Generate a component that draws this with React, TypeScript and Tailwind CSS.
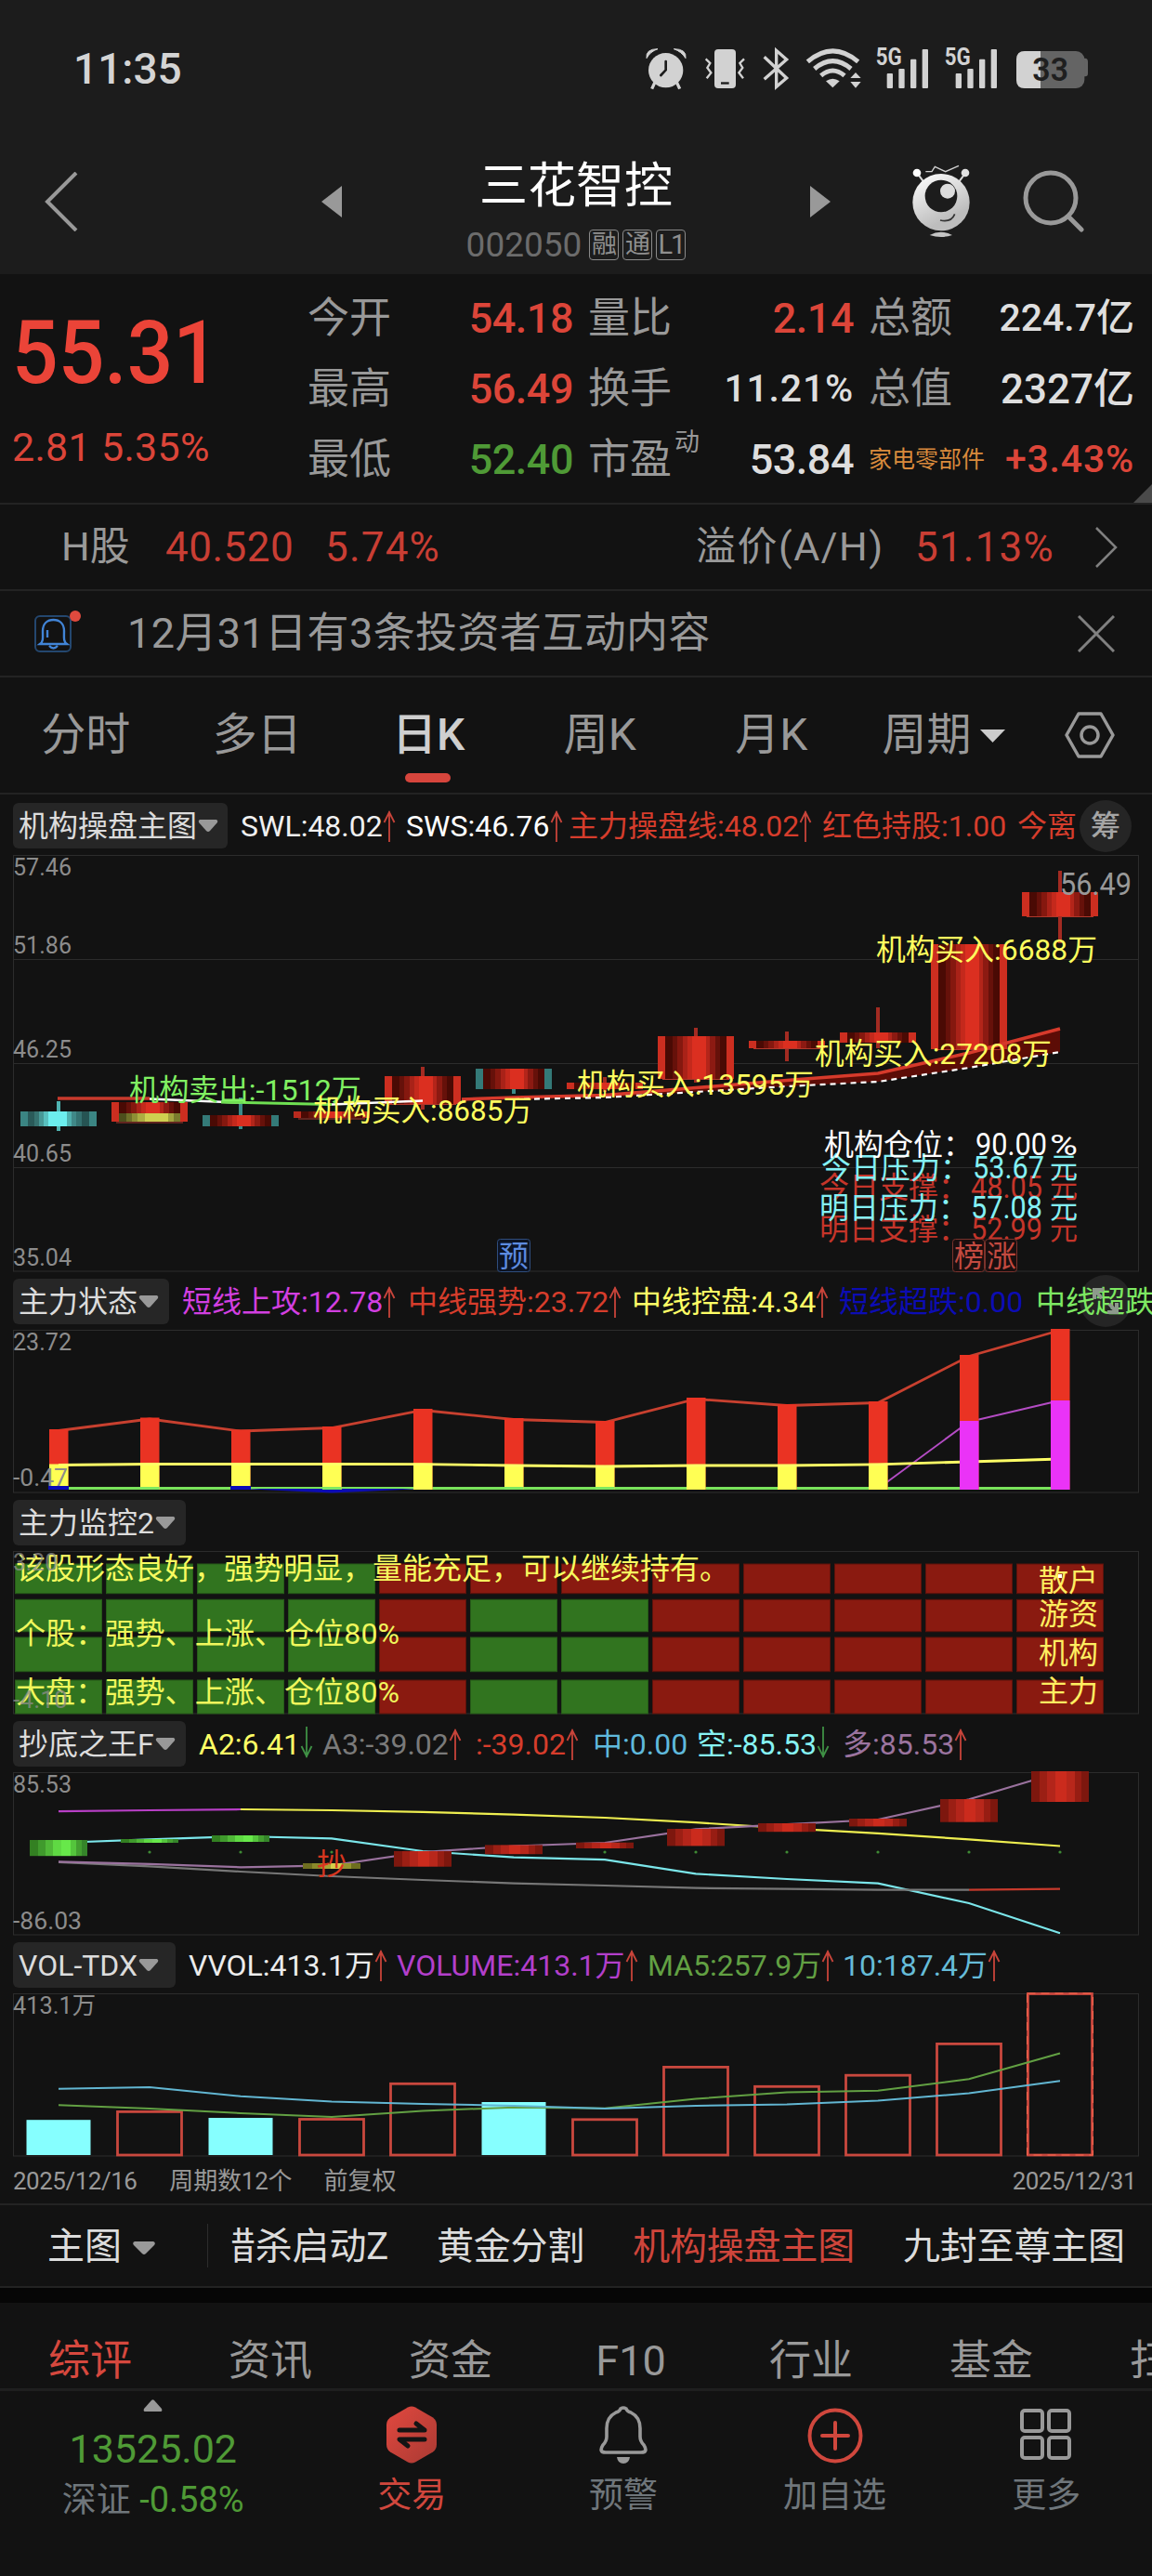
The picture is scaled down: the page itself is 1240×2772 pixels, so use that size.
import type { ReactNode } from 'react';

type Dir = 'up' | 'down';

interface Reading {
  text: string;
  color: string;
  width: string;
  dir?: Dir;
}

// horizontal centre of the n-th trading day
const cx = (i: number) => 63 + i * 98;

const points = (ys: number[], from = 0) => ys.map((y, i) => `${cx(i + from)},${y}`).join(' ');

const quotes = [
  { label: '今开', value: '54.18', style: 'text-[#dc4539] text-[45px] tracking-[-0.5px]' },
  { label: '量比', value: '2.14', style: 'text-[#dc4539] text-[45px] tracking-[-0.5px]' },
  { label: '总额', value: '224.7亿', style: 'text-[#dedede] text-[41px]' },
  { label: '最高', value: '56.49', style: 'text-[#dc4539] text-[45px] tracking-[-0.5px]' },
  { label: '换手', value: '11.21%', style: 'text-[#dedede] text-[41px] tracking-[0.8px]' },
  { label: '总值', value: '2327亿', style: 'text-[#dedede] text-[44px]' },
  { label: '最低', value: '52.40', style: 'text-[#4f9a36] text-[45px] tracking-[-0.5px]' },
  { label: '市盈', sup: '动', value: '53.84', style: 'text-[#dedede] text-[45px] tracking-[-0.5px]' },
  { label: '家电零部件', sector: true, value: '+3.43%', style: 'text-[#dc4539] text-[41px] tracking-[0.8px]' },
];

const mainReadings: Reading[] = [
  { text: 'SWL:48.02', color: 'text-[#f0f0f0]', width: 'w-[178px]', dir: 'up' },
  { text: 'SWS:46.76', color: 'text-white', width: 'w-[175px]', dir: 'up' },
  { text: '主力操盘线:48.02', color: 'text-[#d63d2c]', width: 'w-[273px]', dir: 'up' },
  { text: '红色持股:1.00', color: 'text-[#d63d2c]', width: 'w-[210px]' },
  { text: '今离场:0.00', color: 'text-[#d63d2c]', width: 'w-[180px]' },
];

const stateReadings: Reading[] = [
  { text: '短线上攻:12.78', color: 'text-[#d23fe0]', width: 'w-[243px]', dir: 'up' },
  { text: '中线强势:23.72', color: 'text-[#d63d2c]', width: 'w-[241px]', dir: 'up' },
  { text: '中线控盘:4.34', color: 'text-[#ffff66]', width: 'w-[223px]', dir: 'up' },
  { text: '短线超跌:0.00', color: 'text-[#0c0cb4]', width: 'w-[212px]' },
  { text: '中线超跌:0.00', color: 'text-[#7de862]', width: 'w-[212px]' },
];

const bottomReadings: Reading[] = [
  { text: 'A2:6.41', color: 'text-[#ffff66]', width: 'w-[133px]', dir: 'down' },
  { text: 'A3:-39.02', color: 'text-[#7a7a7a]', width: 'w-[165px]', dir: 'up' },
  { text: ':-39.02', color: 'text-[#d63d2c]', width: 'w-[126px]', dir: 'up' },
  { text: '中:0.00', color: 'text-[#5fb9dc]', width: 'w-[112px]' },
  { text: '空:-85.53', color: 'text-[#86f3f3]', width: 'w-[157px]', dir: 'down' },
  { text: '多:85.53', color: 'text-[#9b749f]', width: 'w-[150px]', dir: 'up' },
];

const volReadings: Reading[] = [
  { text: 'VVOL:413.1万', color: 'text-[#ececec]', width: 'w-[224px]', dir: 'up' },
  { text: 'VOLUME:413.1万', color: 'text-[#b33fcb]', width: 'w-[270px]', dir: 'up' },
  { text: 'MA5:257.9万', color: 'text-[#62a043]', width: 'w-[210px]', dir: 'up' },
  { text: '10:187.4万', color: 'text-[#66bcd8]', width: 'w-[190px]', dir: 'up' },
];

// top, bottom, high, low in chart pixels
const candles = [
  { t: 1196, b: 1212, h: 1185, l: 1217, edge: '#3b8583', fill: 'url(#cyan)', wick: '#4fb3b1' },
  { t: 1186, b: 1207, h: 1186, l: 1207, edge: '#cc2e20', fill: 'url(#red)', wick: '#a32b22' },
  { t: 1200, b: 1212, h: 1181, l: 1215, edge: '#347a78', fill: 'url(#red)', wick: '#3b8a88' },
  { t: 1196, b: 1203, h: 1196, l: 1203, edge: '#b92a1e', fill: 'url(#red)', wick: '#a32b22' },
  { t: 1158, b: 1188, h: 1148, l: 1194, edge: '#cc2e20', fill: 'url(#red)', wick: '#a32b22' },
  { t: 1150, b: 1172, h: 1150, l: 1177, edge: '#347a78', fill: 'url(#red)', wick: '#3b8a88' },
  { t: 1165, b: 1172, h: 1159, l: 1175, edge: '#cc2e20', fill: 'url(#red)', wick: '#a32b22' },
  { t: 1115, b: 1161, h: 1106, l: 1165, edge: '#cc2e20', fill: 'url(#red)', wick: '#a32b22' },
  { t: 1120, b: 1128, h: 1110, l: 1142, edge: '#cc2e20', fill: 'url(#red)', wick: '#a32b22' },
  { t: 1111, b: 1122, h: 1084, l: 1128, edge: '#cc2e20', fill: 'url(#red)', wick: '#a32b22' },
  { t: 1016, b: 1129, h: 1016, l: 1129, edge: '#cc2e20', fill: 'url(#red)', wick: '#a32b22' },
  { t: 960, b: 986, h: 937, l: 1015, edge: '#cc2e20', fill: 'url(#red)', wick: '#a32b22' },
];

const stateTops = [1538, 1525.5, 1538.5, 1535, 1516, 1526, 1529, 1504, 1511, 1508, 1458, 1430];
const stateMid = [1576.5, 1575.5, 1575.5, 1575.5, 1575.7, 1577, 1578, 1577, 1577, 1575.8, 1573, 1570];

const gridRows = [
  { y: 1683, h: 31.7, cells: 'ggggrrrrrrrr' },
  { y: 1721.3, h: 34.4, cells: 'ggggrggrrrrr' },
  { y: 1762, h: 36.7, cells: 'ggggrggrrrrr' },
  { y: 1808, h: 36, cells: 'ggggrggrrrrr' },
];

const kingBars = [
  [1980, 1997.2, 'url(#kg)'],
  [1979, 1983, 'url(#kg)'],
  [1975, 1982, 'url(#kg)'],
  [2005, 2011, 'url(#ky)'],
  [1992, 2008.7, 'url(#kr)'],
  [1985.4, 1995.2, 'url(#kr)'],
  [1982.7, 1989, 'url(#kr)'],
  [1968, 1986.4, 'url(#kr)'],
  [1962, 1971.2, 'url(#kr)'],
  [1957, 1965.4, 'url(#kr)'],
  [1936, 1960.7, 'url(#kr)'],
  [1906, 1939, 'url(#kr)'],
] as const;

const volTops = [2281.2, 2271.4, 2279, 2279.5, 2241.3, 2262, 2279.8, 2223.4, 2244.3, 2232.2, 2198.4, 2144.5];
const volDown = [0, 2, 5];

function T({ x, y, w, size = 32, fill, children }: { x: number; y: number; w?: number; size?: number; fill: string; children: string }) {
  return (
    <text x={x} y={y} fontSize={size} fill={fill} textLength={w} lengthAdjust="spacingAndGlyphs">
      {children}
    </text>
  );
}

function AxisLabel({ y, w, children }: { y: number; w: number; children: string }) {
  return <T x={14} y={y} w={w} size={26} fill="#8c8c8c">{children}</T>;
}

// gradient made of hard stripes, [width, colour] pairs
function Stripes({ id, bands }: { id: string; bands: [number, string][] }) {
  const total = bands.reduce((sum, [w]) => sum + w, 0);
  let pos = 0;
  return (
    <linearGradient id={id}>
      {bands.flatMap(([w, color], i) => {
        const start = pos / total;
        pos += w;
        return [
          <stop key={`${i}a`} offset={start} stopColor={color} />,
          <stop key={`${i}b`} offset={pos / total} stopColor={color} />,
        ];
      })}
    </linearGradient>
  );
}

function Chart({ top, height, children }: { top: number; height: number; children: ReactNode }) {
  return (
    <svg className="block w-full shrink-0 overflow-visible" height={height} viewBox={`0 ${top} 1240 ${height}`}>
      <rect x="14.5" y={top + 0.5} width="1211" height={height - 1.5} fill="none" stroke="#2c2c2c" />
      {children}
    </svg>
  );
}

function Arrow({ dir }: { dir: Dir }) {
  return dir === 'up' ? (
    <svg className="h-[34px] w-[14px] shrink-0" viewBox="0 0 14 34" fill="none" stroke="#c8443a" strokeWidth="1.8">
      <path d="M7 1v33M1.500 13L7 2l5.500 11" />
    </svg>
  ) : (
    <svg className="mb-[3px] h-[34px] w-[14px] shrink-0" viewBox="0 0 14 34" fill="none" stroke="#3f9145" strokeWidth="1.8">
      <path d="M7 0v33M1.500 21L7 32l5.500-11" />
    </svg>
  );
}

function PanelHeader({ title, box, pad, chip, readings = [], children }: { title: string; box: string; pad: string; chip: string; readings?: Reading[]; children?: ReactNode }) {
  return (
    <div className={`relative flex shrink-0 overflow-hidden pl-3.5 ${box} ${pad}`}>
      <button className={`flex h-[49px] shrink-0 items-center rounded-md bg-[#262626] pl-1.5 text-[32px] text-[#dcdcdc] ${chip}`}>
        <span className="whitespace-nowrap">{title}</span>
        <svg className="ml-px h-3.5 w-[22px] shrink-0" viewBox="0 0 22 14">
          <path d="M2 0h18q2 1 1 3l-8 9q-2 2-4 0L1 3Q0 1 2 0z" fill="#999" />
        </svg>
      </button>
      <div className="relative z-10 ml-[14px] flex h-[49px] items-center text-[32px] whitespace-nowrap">
        {readings.map((r) => (
          <div key={r.text} className={`flex shrink-0 items-center ${r.width} ${r.color}`}>
            {r.text}
            {r.dir && <Arrow dir={r.dir} />}
          </div>
        ))}
      </div>
      {children}
    </div>
  );
}

function StatusIcons() {
  return (
    <svg className="h-[60px] w-[520px]" viewBox="0 0 1560 180" fill="#d2d2d2">
      <circle cx="110" cy="107" r="56" />
      <path d="M48 68Q44 38 84 38Q60 46 48 68zM174 68Q178 38 136 38Q160 46 174 68z" stroke="#d2d2d2" strokeWidth="3" />
      <path d="M75 145l-10 22M145 145l10 22" stroke="#d2d2d2" strokeWidth="10" />
      <path d="M110 78v28l-16 17" stroke="#1c1c1c" strokeWidth="8" fill="none" strokeLinecap="round" />
      <rect x="267" y="39" width="69" height="126" rx="12" />
      <rect x="288" y="145" width="26" height="7" fill="#1c1c1c" />
      <path d="M239 70l14 14-9 15 12 16-14 18M363 70l-14 14 9 15-12 16 14 18" stroke="#d2d2d2" strokeWidth="7" fill="none" />
      <path d="M428 64l72 68-33 28V43l33 29-72 64" stroke="#d2d2d2" strokeWidth="10" fill="none" />
      <g fill="none" stroke="#d2d2d2" strokeWidth="15">
        <path d="M568 79Q649 10 731 79" />
        <path d="M590 102Q649 52 708 102" />
        <path d="M611 124Q649 92 687 124" />
      </g>
      <path d="M627 142Q649 126 671 142L649 163z" />
      <path d="M706 132l17-18 17 18zM706 144h34l-17 20z" />
      <Signal x={0} />
      <Signal x={222} />
      <path d="M1460 68h4q9 0 9 11v38q0 10-9 10h-4z" fill="#646464" />
      <rect x="1242" y="45" width="220" height="120" rx="27" fill="#646464" />
      <path d="M1320 45h-51q-27 0-27 27v66q0 27 27 27h51z" />
      <text x="1294" y="142" fontSize="105" fontWeight="600" fill="#1f1f1f" textLength="116" lengthAdjust="spacingAndGlyphs">33</text>
    </svg>
  );
}

function Signal({ x }: { x: number }) {
  return (
    <g transform={`translate(${x} 0)`}>
      <text x="788" y="91" fontSize="76" fontWeight="700" textLength="84" lengthAdjust="spacingAndGlyphs">5G</text>
      <rect x="824" y="117" width="19" height="48" rx="3" />
      <rect x="862" y="102" width="19" height="63" rx="3" />
      <rect x="900" y="71" width="19" height="94" rx="3" />
      <rect x="938" y="39" width="19" height="126" rx="3" />
    </g>
  );
}

function Robot() {
  return (
    <svg className="h-[80px] w-[64px]" viewBox="904 408 192 240">
      <defs>
        <linearGradient id="body" x1="0.2" y1="0" x2="0.7" y2="1">
          <stop offset="0" stopColor="#fafafa" />
          <stop offset="0.8" stopColor="#bdbdbd" />
        </linearGradient>
      </defs>
      <path d="M925 442l18 24M1076 442l-18 24" stroke="#d8d8d8" strokeWidth="6" />
      <circle cx="922" cy="438" r="13" fill="#fff" />
      <circle cx="1078" cy="438" r="13" fill="#e2e2e2" />
      <path d="M950 434h20l10-16 34 16 43-19" fill="none" stroke="#d0d0d0" strokeWidth="4" />
      <circle cx="1000" cy="533" r="92" fill="url(#body)" />
      <circle cx="1000" cy="513" r="52" fill="#1c1c1c" />
      <circle cx="1021" cy="497" r="24" fill="#dcdcdc" />
      <path d="M997 591q36 8 47-20" fill="none" stroke="#333" strokeWidth="5" />
      <path d="M963 639q36-20 73 0-36 12-73 0z" fill="#c4c4c4" />
    </svg>
  );
}

function Header() {
  return (
    <header className="h-[295px] shrink-0 bg-[#1c1c1c]">
      <div className="flex h-[150px] items-start justify-between pt-10 pr-10 pl-[79px]">
        <div className="mt-[7px] text-[46px] leading-[54px] font-medium text-[#d4d4d4]">11:35</div>
        <StatusIcons />
      </div>
      <div className="flex h-[145px]">
        <svg className="mt-[35px] ml-[48px] h-[64px] w-9" viewBox="0 0 36 64" fill="none" stroke="#999" strokeWidth="4">
          <path d="M34 1L3 32l31 31" />
        </svg>
        <svg className="mt-[50px] ml-[262px] h-[34px] w-[22px]" viewBox="0 0 22 34"><path d="M22 0v34L0 17z" fill="#999" /></svg>
        <div className="ml-[134px] flex w-[236px] flex-col items-center">
          <h1 className="mt-[21px] text-[52px] leading-[60px] font-normal whitespace-nowrap text-white">三花智控</h1>
          <div className="mt-[14px] flex items-center gap-1 text-[27px] leading-none text-[#8f8f8f]">
            <span className="mr-1 text-[37px] text-[#6c6c6c]">002050</span>
            <span className="flex h-[33px] w-8 items-center justify-center rounded border border-[#8a8a8a]">融</span>
            <span className="flex h-[33px] w-8 items-center justify-center rounded border border-[#8a8a8a]">通</span>
            <span className="flex h-[33px] w-8 items-center justify-center rounded border border-[#8a8a8a] text-[29px] tracking-[-2px]">L1</span>
          </div>
        </div>
        <svg className="mt-[50px] ml-[134px] h-[34px] w-[22px]" viewBox="0 0 22 34"><path d="M0 0v34l22-17z" fill="#999" /></svg>
        <div className="mt-[26px] ml-[87px]"><Robot /></div>
        <svg className="mt-[33px] ml-[54px] h-[68px] w-[68px]" viewBox="0 0 68 68" fill="none" stroke="#999" strokeWidth="5">
          <circle cx="32" cy="30" r="27" />
          <path d="M51 50l14 14" strokeLinecap="round" />
        </svg>
      </div>
    </header>
  );
}

function Quote() {
  return (
    <section className="relative flex h-[246px] shrink-0">
      <div className="w-[331px] pl-[13px]">
        <div className="mt-[35px] origin-left scale-x-[0.93] text-[94px] leading-[100px] font-medium text-[#eb4438]">55.31</div>
        <div className="mt-[27px] text-[43px] leading-[48px] tracking-[0.3px] whitespace-nowrap text-[#dc4539]">2.81 5.35%</div>
      </div>
      <div className="mt-[10px] grid h-[228px] grid-cols-[286px_286px_286px] grid-rows-[76px_76px_76px] gap-x-4">
        {quotes.map((q) => (
          <div key={q.label} className="flex items-center justify-between whitespace-nowrap">
            {q.sector ? (
              <span className="text-[25px] text-[#d98a3c]">{q.label}</span>
            ) : (
              <span className="relative text-[45px] text-[#999]">
                {q.label}
                {q.sup && <sup className="absolute top-[2px] left-[93px] text-[27px] leading-none">{q.sup}</sup>}
              </span>
            )}
            <span className={`font-medium ${q.style}`}>{q.value}</span>
          </div>
        ))}
      </div>
      <svg className="absolute right-0 bottom-0 h-5 w-5" viewBox="0 0 20 20"><path d="M20 0v20H0z" fill="#4a4a4a" /></svg>
    </section>
  );
}

function HShare() {
  return (
    <section className="flex h-[93px] shrink-0 items-center border-t-2 border-[#232323] pl-[66px] text-[44px] whitespace-nowrap text-[#c93e34]">
      <span className="w-[112px] text-[43px] text-[#999]">H股</span>
      <span className="w-[172px] tracking-[0.5px]">40.520</span>
      <span className="w-[399px] tracking-[1.2px]">5.74%</span>
      <span className="w-[236px] text-[43px] tracking-[1.5px] text-[#999]">溢价(A/H)</span>
      <span className="w-[194px] tracking-[1.2px]">51.13%</span>
      <svg className="h-11 w-6" viewBox="0 0 24 44" fill="none" stroke="#808080" strokeWidth="2.500"><path d="M1 1l21 21L1 43" /></svg>
    </section>
  );
}

function Notice() {
  return (
    <section className="flex h-[93px] shrink-0 items-center border-t-2 border-[#232323] pl-9">
      <svg className="mt-[-4px] h-[48px] w-[52px] shrink-0" viewBox="0 0 52 48" fill="none">
        <rect x="2" y="7" width="38" height="38" rx="5" stroke="#24476f" strokeWidth="2" />
        <path d="M7 37h29c-4-3-3-7-3-14 0-8-5-12-11.500-12S10 15 10 23c0 7 1 11-3 14zM17 39q4.500 5 9 0M15 22v8" stroke="#4184d6" strokeWidth="2.400" />
        <circle cx="45" cy="7" r="6" fill="#e04a3e" />
      </svg>
      <span className="ml-[49px] text-[45px] tracking-[0.4px] whitespace-nowrap text-[#999]">12月31日有3条投资者互动内容</span>
      <svg className="mr-10 ml-auto h-10 w-10" viewBox="0 0 40 40" fill="none" stroke="#808080" strokeWidth="3"><path d="M1 1l38 38M39 1L1 39" /></svg>
    </section>
  );
}

function PeriodTabs() {
  return (
    <nav className="flex h-[128px] shrink-0 items-center border-y-2 border-[#232323] text-[48px] text-[#999]">
      {['分时', '多日', '日K', '周K', '月K'].map((t) => (
        <div key={t} className="relative flex w-[184.500px] justify-center">
          <span className={t === '日K' ? 'font-medium text-[#cfcfcf]' : ''}>{t}</span>
          {t === '日K' && <i className="absolute -bottom-[15px] left-[67px] h-2.5 w-[49px] rounded-full bg-[#d6453c]" />}
        </div>
      ))}
      <div className="ml-[27px] flex items-center">
        周期
        <svg className="mt-0.5 ml-[9px] h-[14px] w-[27px]" viewBox="0 0 27 14"><path d="M0 0h27L13.500 14z" fill="#ccc" /></svg>
      </div>
      <svg className="ml-[64px] h-[50px] w-[54px]" viewBox="0 0 54 50" fill="none" stroke="#999" strokeWidth="3.500">
        <path d="M15 2h24l13 23-13 23H15L2 25z" strokeLinejoin="round" />
        <circle cx="27" cy="25" r="9" />
      </svg>
    </nav>
  );
}

function MainChart() {
  const trend = [1181, 1178.5, 1170.6, 1162.6, 1155, 1133, 1107];
  const base = [1183, 1181, 1175, 1169, 1164, 1149, 1132];
  const levels: [string, string, string, number, number, string][] = [
    ['今日支撑', '48.05', '元', 1045, 1289, '#c5352a'],
    ['今日压力', '53.67', '元', 1047, 1268, '#84f0f4'],
    ['明日支撑', '52.99', '元', 1045, 1334, '#c5352a'],
    ['明日压力', '57.08', '元', 1045, 1311, '#84f0f4'],
    ['机构仓位', '90.00', '%', 1050, 1243, '#ffffff'],
  ];
  return (
    <Chart top={920} height={449}>
      <defs>
        <Stripes id="red" bands={[[9, '#4a0a04'], [6, '#66110a'], [6, '#85180f'], [6, '#a92218'], [6, '#c4291c'], [16, '#db2f20'], [5, '#b3251a'], [6, '#8c1a12'], [6, '#66110a'], [8, '#4a0a04']]} />
        <Stripes id="cyan" bands={[[7, '#2a5a59'], [5, '#367270'], [5, '#479997'], [5, '#58c0bf'], [20, '#6ceeee'], [5, '#4fb0ae'], [5, '#408988'], [6, '#347170'], [8, '#265453']]} />
        <Stripes id="yellow" bands={[[8, '#4d4f1c'], [6, '#6f7029'], [6, '#8e8f35'], [8, '#adad42'], [26, '#cfcf50'], [6, '#a3a33e'], [7, '#7a7b2d']]} />
      </defs>
      <path d="M15 1032.500h1210M15 1144.500h1210M15 1256.500h1210" stroke="#2c2c2c" />
      <AxisLabel y={942} w={63}>57.46</AxisLabel>
      <AxisLabel y={1026} w={63}>51.86</AxisLabel>
      <AxisLabel y={1138} w={63}>46.25</AxisLabel>
      <AxisLabel y={1250} w={63}>40.65</AxisLabel>
      <AxisLabel y={1362} w={63}>35.04</AxisLabel>
      <polygon points={`${points(trend, 5)} ${[...base].reverse().map((y, i) => `${cx(11 - i)},${y}`).join(' ')}`} fill="#5c0c06" />
      {candles.map((c, i) => (
        <g key={i}>
          <rect x={cx(i) - 2} y={c.h} width="4" height={c.l - c.h} fill={c.wick} />
          <rect x={cx(i) - 41} y={c.t} width="82" height={c.b - c.t} fill={c.edge} />
          <rect x={cx(i) - 33} y={c.t} width="66" height={c.b - c.t} fill={c.fill} />
        </g>
      ))}
      <rect x="128" y="1198" width="66" height="9" fill="url(#yellow)" />
      <path d="M125 1208h72M321 1204h72M419 1188.500h72M713 1161.500h72M811 1128.500h72M1007 1129.500h72M1105 986.500h72" stroke="#b0382c" />
      <path d="M1141 986v29" stroke="#a32b22" strokeWidth="4" />
      <path d="M62 1182h99" stroke="#c93a2c" strokeWidth="3.500" />
      <path d="M161 1182.500l98 4" stroke="#fff" strokeWidth="2.500" />
      <path d="M238 1186l119 2.500" stroke="#6fe052" strokeWidth="3" />
      <path d="M357 1188.500l98-4" stroke="#fff" strokeWidth="2.500" />
      <polyline points={`497,1183 ${points(trend, 5)}`} fill="none" stroke="#d63a2b" strokeWidth="3.500" />
      <polyline points={points(base, 5)} fill="none" stroke="#fff" strokeWidth="2.200" strokeDasharray="6 5" />
      <T x={139} y={1184} w={250} fill="#80f062">机构卖出:-1512万</T>
      <T x={337} y={1206} w={236} fill="#ffff5e">机构买入:8685万</T>
      <T x={621} y={1178} w={255} fill="#ffff5e">机构买入:13595万</T>
      <T x={877} y={1145} w={255} fill="#ffff5e">机构买入:27208万</T>
      <T x={943} y={1033} w={238} fill="#ffff5e">机构买入:6688万</T>
      <T x={1141} y={963} w={77} size={33} fill="#999">56.49</T>
      {levels.map(([name, value, unit, x, y, color]) => (
        <g key={name}>
          <T x={x - 163} y={y} fill={color}>{`${name}：`}</T>
          <T x={x} y={y} w={77} size={33} fill={color}>{value}</T>
          <T x={1130} y={y} w={30} fill={color}>{unit}</T>
        </g>
      ))}
      <rect x="535.500" y="1333.500" width="35" height="35" rx="3" fill="#0c1424" stroke="#2f4d7e" />
      <T x={537} y={1363} fill="#5d8be0">预</T>
      <rect x="1025.500" y="1333.500" width="34" height="35" rx="3" fill="#1a0f0f" stroke="#7a322c" />
      <rect x="1060.500" y="1333.500" width="34" height="35" rx="3" fill="#1a0f0f" stroke="#7a322c" />
      <T x={1027} y={1363} fill="#c24a40">榜</T>
      <T x={1062} y={1363} fill="#c24a40">涨</T>
    </Chart>
  );
}

function StateChart() {
  return (
    <Chart top={1431} height={176}>
      <AxisLabel y={1453} w={63}>23.72</AxisLabel>
      <polyline points={points(stateTops.map((y) => y + 1.5))} fill="none" stroke="#c8402f" strokeWidth="2.800" />
      <polyline points={points([1602, 1530, 1507], 9)} fill="none" stroke="#b44cc4" strokeWidth="2" />
      <path d="M63 1601.500H1141" stroke="#79e35b" strokeWidth="3" />
      <path d="M259 1602L357 1606.500 455 1602z" fill="#0c0cb4" />
      {stateTops.map((top, i) => (
        <g key={i}>
          <rect x={cx(i) - 10} y={top} width="20.500" height={1603 - top} fill="#ea3323" />
          {i < 10 && <rect x={cx(i) - 10} y={stateMid[i] - 1} width="20.500" height={1604 - stateMid[i]} fill="#ffff54" />}
          {[1, 3, 5, 6].includes(i) && <rect x={cx(i) - 10} y="1600" width="20.500" height="3" fill="#7eea60" />}
          {[0, 2].includes(i) && <rect x={cx(i) - 11} y="1599" width="22" height="4" fill="#0a0ab8" />}
        </g>
      ))}
      <polyline points={points(stateMid)} fill="none" stroke="#ffff66" strokeWidth="2.800" />
      <rect x="1033" y="1529" width="20.500" height="74" fill="#ea33f7" />
      <rect x="1131" y="1507" width="20.500" height="96" fill="#ea33f7" />
      <AxisLabel y={1599} w={59}>-0.47</AxisLabel>
    </Chart>
  );
}

function MonitorChart() {
  const tags: [string, number][] = [['散户', 1712], ['游资', 1748], ['机构', 1790], ['主力', 1831]];
  return (
    <Chart top={1669} height={176}>
      {gridRows.map((row) =>
        row.cells.split('').map((c, i) => (
          <rect
            key={`${row.y}-${i}`}
            x={cx(i) - 46.5}
            y={row.y}
            width="93"
            height={row.h}
            fill={c === 'g' ? '#31741f' : '#8a1a10'}
            stroke={c === 'g' ? '#265c18' : '#5e120b'}
            strokeWidth="1"
          />
        )),
      )}
      <T x={17} y={1699} fill="#f7fb5f">该股形态良好，强势明显，量能充足，可以继续持有。</T>
      <T x={17} y={1769} w={413} fill="#f0f75c">个股：强势、上涨、仓位80%</T>
      <T x={17} y={1832} w={413} fill="#f0f75c">大盘：强势、上涨、仓位80%</T>
      {tags.map(([name, y]) => <T key={name} x={1118} y={y} fill="#ffee60">{name}</T>)}
      <rect x="1139" y="1694" width="4" height="4" fill="#fff" />
      <g opacity="0.75">
        <AxisLabel y={1690} w={48}>3.20</AxisLabel>
        <AxisLabel y={1838} w={59}>-4.10</AxisLabel>
      </g>
    </Chart>
  );
}

function KingChart() {
  return (
    <Chart top={1907} height={176}>
      <defs>
        <Stripes id="kg" bands={[[9, '#338022'], [8, '#409a2d'], [8, '#50b838'], [9, '#5fd943'], [10, '#67e84a'], [6, '#54c53c'], [6, '#439f30'], [6, '#35852a']]} />
        <Stripes id="ky" bands={[[10, '#6e6e20'], [10, '#8a8a2a'], [10, '#a5a634'], [12, '#d6cf4a'], [10, '#94952e'], [10, '#6e6e20']]} />
        <Stripes id="kr" bands={[[9, '#7d170e'], [8, '#9b1f14'], [9, '#b3251a'], [12, '#cb2b1d'], [9, '#b8271b'], [7, '#971d13'], [8, '#7d170e']]} />
      </defs>
      <AxisLabel y={1929} w={63}>85.53</AxisLabel>
      <AxisLabel y={2075.5} w={74}>-86.03</AxisLabel>
      <g fill="none" strokeWidth="2.200">
        <polyline points={points([1949.2, 1948, 1947])} stroke="#b83fc6" />
        <polyline points={points([1947, 1948, 1949.8, 1952.6, 1956, 1961.2, 1967.3, 1972.8, 1979.4, 1986.5], 2)} stroke="#eeee50" />
        <polyline points={points([1983, 1979.4, 1976, 1978.4, 1992, 1998.7, 2001.2, 2016.4, 2022, 2026.6, 2048, 2080.3])} stroke="#7be6ea" />
        <polyline points={points([2003.8, 2008.3, 2014, 2019, 2023, 2026.6, 2029, 2031.7, 2032.7, 2033.7, 2033.7])} stroke="#777" />
        <polyline points={points([2033.7, 2032.7], 10)} stroke="#c63a2c" />
        <polyline points={points([2003.3, 2005.8, 2009.3, 2007.3, 1993, 1986.5, 1983, 1968.3, 1963.2, 1958, 1936.3, 1907])} stroke="#9a729e" />
      </g>
      {kingBars.map(([top, bottom, fill], i) => (
        <rect key={i} x={cx(i) - 31} y={top} width="62" height={bottom - top} fill={fill} />
      ))}
      {[1, 2, 3, 6, 7, 8, 9, 10, 11].map((i) => <circle key={i} cx={cx(i)} cy="1993" r="1.600" fill="#3f8a35" />)}
      <T x={341} y={2017} fill="#d8361f">抄</T>
    </Chart>
  );
}

function VolumeChart() {
  return (
    <Chart top={2145} height={176}>
      <AxisLabel y={2167} w={89}>413.1万</AxisLabel>
      {volTops.map((top, i) =>
        volDown.includes(i) ? (
          <rect key={i} x={cx(i) - 34.5} y={top} width="69" height={2319 - top} fill="#86ffff" />
        ) : (
          <rect key={i} x={cx(i) - 34.5} y={top + 1} width="69" height={2318 - top} fill="none" stroke="#c9483e" strokeWidth="2.800" />
        ),
      )}
      <rect x={cx(11) - 35.5} y="2145" width="71" height="174" fill="none" stroke="#ff6a50" strokeWidth="1" strokeDasharray="9 6" />
      <g fill="none" strokeWidth="2">
        <polyline points={points([2265.3, 2269, 2274, 2278, 2271.4, 2267.7, 2268.7, 2258.5, 2251.4, 2249.7, 2237.2, 2209.5])} stroke="#62a043" />
        <polyline points={points([2247.7, 2246, 2255.8, 2261.6, 2264, 2266, 2269, 2266, 2264.6, 2260.5, 2252.4, 2239.3])} stroke="#62b6d2" />
      </g>
    </Chart>
  );
}

function IndicatorBar() {
  return (
    <div className="flex h-[91px] shrink-0 items-center border-y-2 border-[#232323] text-[40px] whitespace-nowrap text-[#dcdcdc]">
      <div className="flex w-[223px] shrink-0 items-center pt-0.5 pl-[51px]">
        主图
        <svg className="mt-1 ml-3 h-[15px] w-6" viewBox="0 0 24 15"><path d="M2 0h20q3 1 1 4l-9 9q-2 2-4 0L1 4q-2-3 1-4z" fill="#999" /></svg>
      </div>
      <div className="mr-[25px] h-[47px] w-px shrink-0 bg-[#2c2c2c]" />
      <div className="flex flex-1 gap-[52px] overflow-hidden pt-0.5 tracking-[-0.2px]">
        <span className="-ml-3.5">猎杀启动Z</span>
        <span>黄金分割</span>
        <span className="text-[#cf453b]">机构操盘主图</span>
        <span>九封至尊主图</span>
      </div>
    </div>
  );
}

function NavItem({ label, color, children }: { label: string; color: string; children: ReactNode }) {
  return (
    <div className={`flex w-[228px] flex-col items-center text-[37px] ${color}`}>
      <svg className="mt-4 h-[62px] w-[62px]" viewBox="0 0 62 62" fill="none">{children}</svg>
      <span className="mt-[11px] leading-[48px]">{label}</span>
    </div>
  );
}

function BottomNav() {
  return (
    <footer className="flex h-[199px] shrink-0">
      <div className="flex w-[330px] flex-col items-center text-[#4f9a36]">
        <svg className="mt-[9px] h-[13px] w-[21px]" viewBox="0 0 21 13"><path d="M9 1q1.500-1.500 3 0l8 9q1 3-1 3H2q-2 0-1-3z" fill="#999" /></svg>
        <div className="mt-[14px] text-[43px] leading-[52px]">13525.02</div>
        <div className="mt-[5px] text-[38px] leading-[48px]"><span className="text-[37px] text-[#6f767b]">深证</span> -0.58%</div>
      </div>
      <NavItem label="交易" color="text-[#d0473d]">
        <defs>
          <linearGradient id="hex" x1="0" y1="0" x2="1" y2="1"><stop offset="0" stopColor="#e2483f" /><stop offset="1" stopColor="#a93a33" /></linearGradient>
        </defs>
        <path d="M27 1.500q4-2 8 0l19 11q4 3 4 8v21q0 5-4 8l-19 11q-4 2-8 0l-19-11q-4-3-4-8v-21q0-5 4-8z" fill="url(#hex)" />
        <path d="M18 26h27l-9-7M45 36H18l9 7" stroke="#141414" strokeWidth="5" strokeLinecap="round" strokeLinejoin="round" />
      </NavItem>
      <NavItem label="预警" color="text-[#6f767b]">
        <path d="M28 3q3-2 6 0 1 3 5 4 10 5 10 17v9q0 5 4 9 5 8-3 8H12q-8 0-3-8 4-4 4-9v-9Q13 12 23 7q4-1 5-4z" stroke="#999" strokeWidth="3.600" />
        <path d="M24 55h14q-1 7-7 7t-7-7z" fill="#999" />
      </NavItem>
      <NavItem label="加自选" color="text-[#6f767b]">
        <circle cx="31" cy="32" r="27.500" stroke="#d0473d" strokeWidth="4" />
        <path d="M31 18v28M17 32h28" stroke="#d0473d" strokeWidth="4" strokeLinecap="round" />
      </NavItem>
      <NavItem label="更多" color="text-[#6f767b]">
        <g stroke="#999" strokeWidth="4">
          <rect x="5" y="5" width="22" height="22" rx="3" />
          <rect x="34" y="5" width="22" height="22" rx="3" />
          <rect x="5" y="34" width="22" height="22" rx="3" />
          <rect x="34" y="34" width="22" height="22" rx="3" />
        </g>
      </NavItem>
    </footer>
  );
}

export default function App() {
  return (
    <div className="flex h-[2772px] w-[1240px] flex-col overflow-hidden bg-[#121212] [font-family:Roboto,'Noto_Sans_CJK_SC',sans-serif]">
      <Header />
      <Quote />
      <HShare />
      <Notice />
      <PeriodTabs />

      <PanelHeader title="机构操盘主图" box="h-[65px]" pad="pt-[9px]" chip="w-[231px]" readings={mainReadings}>
        <div className="absolute top-[6px] left-[1158px] z-20 h-[56px] w-[82px] bg-[#121212] pl-1">
          <span className="flex h-14 w-14 items-center justify-center rounded-full bg-[#252525] text-[32px] font-medium text-[#a5a5a5]">筹</span>
        </div>
      </PanelHeader>
      <MainChart />

      <PanelHeader title="主力状态" box="h-[62px]" pad="pt-[7px]" chip="w-[168px]" readings={stateReadings}>
        <span className="absolute top-[3px] left-[1162px] h-14 w-14 rounded-full bg-[#252525]" />
        <svg className="absolute top-[16px] left-[1175px] z-20 h-[30px] w-[30px]" viewBox="0 0 30 30" fill="none" stroke="#8d9a8c" strokeWidth="4">
          <path d="M13 3H3v10M4 4l7 8M17 27h10V17M26 26l-7-8" />
        </svg>
      </PanelHeader>
      <StateChart />

      <PanelHeader title="主力监控2" box="h-[62px]" pad="pt-[7px]" chip="w-[186px]" />
      <MonitorChart />

      <PanelHeader title="抄底之王F" box="h-[62px]" pad="pt-[7px]" chip="w-[186px]" readings={bottomReadings} />
      <KingChart />

      <PanelHeader title="VOL-TDX" box="h-[62px]" pad="pt-[7px]" chip="w-[175px]" readings={volReadings} />
      <VolumeChart />

      <div className="flex h-[50px] shrink-0 items-center pt-0.5 pr-[17px] pl-3.5 text-[26px] text-[#999]">
        <span className="tracking-[-0.5px]">2025/12/16</span>
        <span className="ml-[35px] tracking-[-0.2px]">周期数12个</span>
        <span className="ml-[34px]">前复权</span>
        <span className="ml-auto tracking-[-0.5px]">2025/12/31</span>
      </div>
      <IndicatorBar />
      <div className="h-4 shrink-0 bg-[#060606]" />

      <nav className="flex h-[95px] shrink-0 overflow-hidden border-b-[3px] border-[#1f1f1f] pt-[30px] text-[45px] leading-[66px] whitespace-nowrap text-[#999]">
        {['综评', '资讯', '资金', 'F10', '行业', '基金', '扫雷'].map((t) => (
          <span key={t} className={`w-[194px] shrink-0 text-center ${t === '综评' ? 'text-[#d6483e]' : ''}`}>{t}</span>
        ))}
      </nav>
      <BottomNav />
    </div>
  );
}
